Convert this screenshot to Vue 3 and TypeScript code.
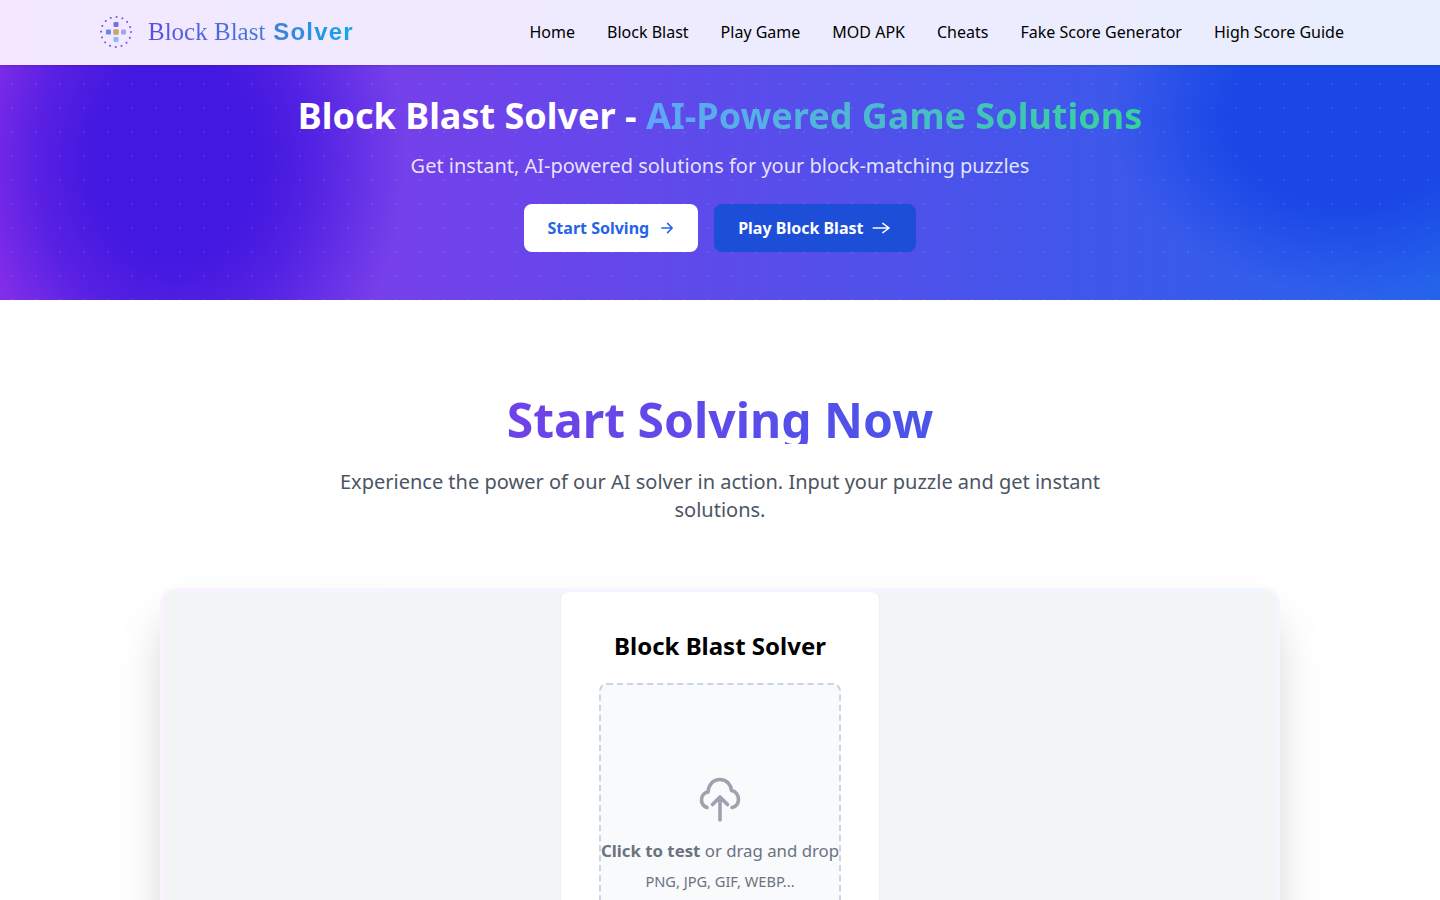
<template>
  <div class="page">
    <header class="site-header">
      <div class="site-header__inner">
        <a class="logo">
          <svg class="logo__icon" viewBox="0 0 40 40" fill="none" xmlns="http://www.w3.org/2000/svg">
            <circle cx="20" cy="20" r="15" stroke="#6d5ce8" stroke-width="2" stroke-linecap="round" stroke-dasharray="0.1 5.8" />
            <rect x="17.5" y="10" width="5" height="5" rx="1" fill="#7a6de0" />
            <rect x="10" y="17.5" width="5" height="5" rx="1" fill="#5b8def" />
            <rect x="17.3" y="17.3" width="5.4" height="5.4" rx="1" fill="#bfa76a" />
            <rect x="25" y="17.5" width="5" height="5" rx="1" fill="#a9a3e8" />
            <rect x="17.5" y="25" width="5" height="5" rx="1" fill="#8ab8fa" />
          </svg>
          <span class="logo__text">
            <span class="logo__serif">Block Blast</span> <span class="logo__bold">Solver</span>
          </span>
        </a>
        <nav class="nav">
          <a v-for="link in links" :key="link" class="nav__link">{{ link }}</a>
        </nav>
      </div>
    </header>

    <section class="hero">
      <h1 class="hero__title">Block Blast Solver - <span class="hero__accent">AI-Powered Game Solutions</span></h1>
      <p class="hero__sub">Get instant, AI-powered solutions for your block-matching puzzles</p>
      <div class="hero__actions">
        <a class="btn btn--white">
          Start Solving
          <svg class="btn__arrow" viewBox="0 0 16 16" fill="none" stroke="currentColor" stroke-width="1.6" stroke-linecap="round" stroke-linejoin="round">
            <path d="M3.8 8h10.4M9.6 3.4 14.2 8l-4.6 4.6" />
          </svg>
        </a>
        <a class="btn btn--blue">
          Play Block Blast
          <svg class="btn__long" viewBox="0 0 24 24" fill="none" stroke="currentColor" stroke-width="1.8" stroke-linecap="round" stroke-linejoin="round">
            <path d="M1.5 12h19M13 6.5l7.5 5.5-7.5 5.5" />
          </svg>
        </a>
      </div>
    </section>

    <section class="solver">
      <h2 class="solver__title">Start Solving Now</h2>
      <p class="solver__sub">Experience the power of our AI solver in action. Input your puzzle and get instant solutions.</p>
      <div class="frame">
        <div class="frame__inner">
          <div class="panel">
            <h3 class="panel__title">Block Blast Solver</h3>
            <div class="drop">
              <svg class="drop__icon" viewBox="-2 -2 44 48" fill="none" stroke="currentColor" stroke-width="3.6" stroke-linecap="round" stroke-linejoin="round">
                <path d="M7 29.5C3 28 1.5 25 1.5 22C1.5 17.5 4.5 14.5 8 14C8.5 7 13 1.5 20 1.5C27 1.5 31 7 31.5 12.5C36 13 38.5 17.5 38.5 21.5C38.5 25.5 36 28.5 32 29.5" />
                <path d="M20 42V19M12.5 26.5 20 19l7.5 7.5" />
              </svg>
              <p class="drop__text"><strong>Click to test</strong> or drag and drop</p>
              <p class="drop__hint">PNG, JPG, GIF, WEBP...</p>
            </div>
          </div>
        </div>
      </div>
    </section>
  </div>
</template>

<script setup lang="ts">
const links: string[] = [
  'Home',
  'Block Blast',
  'Play Game',
  'MOD APK',
  'Cheats',
  'Fake Score Generator',
  'High Score Guide'
]
</script>

<style>
html,
body {
  margin: 0;
  background: #fff;
}
</style>

<style scoped>
.page {
  font-family: 'Noto Sans', sans-serif;
  color: #000;
}

.site-header {
  position: relative;
  z-index: 1;
  height: 65px;
  box-sizing: border-box;
  padding-bottom: 1px;
  background: linear-gradient(90deg, #f3e8ff, #e8eefe);
  box-shadow: 0 1px 2px rgba(0, 0, 0, 0.12);
}

.site-header__inner {
  max-width: 1248px;
  height: 100%;
  margin: 0 auto;
  display: flex;
  align-items: center;
  justify-content: space-between;
}

.logo {
  display: flex;
  align-items: center;
  gap: 12px;
}

.logo__icon {
  width: 40px;
  height: 40px;
}

.logo__text {
  font-family: 'Liberation Sans', sans-serif;
  font-size: 24px;
  letter-spacing: 1.2px;
  line-height: 32px;
  background: linear-gradient(90deg, #5a4fe0, #3f7fd8 60%, #12a8ea);
  -webkit-background-clip: text;
  background-clip: text;
  color: transparent;
}

.logo__serif {
  font-family: 'Liberation Serif', serif;
  font-size: 25px;
  letter-spacing: 0;
}

.logo__bold {
  font-weight: 700;
}

.nav {
  display: flex;
  gap: 32px;
}

.nav__link {
  font-size: 16px;
  line-height: 24px;
}

.hero {
  height: 235px;
  box-sizing: border-box;
  padding-top: 25px;
  text-align: center;
  overflow: hidden;
  background-color: #2563eb;
  background-image:
    radial-gradient(circle, rgba(255, 255, 255, 0.09) 1px, transparent 1.5px),
    radial-gradient(ellipse 230px 280px at 175px 95px, #4318e0 35%, rgba(67, 24, 224, 0.72) 60%, rgba(67, 24, 224, 0) 100%),
    radial-gradient(ellipse 240px 180px at 1350px 50px, #1a47e6 50%, rgba(26, 71, 230, 0) 100%),
    linear-gradient(90deg, #9333ea, #2563eb);
  background-size: 24px 24px, auto, auto, auto;
  background-position: 0 7px, 0 0, 0 0, 0 0;
}

.hero__title {
  margin: 0;
  font-size: 36px;
  line-height: 52px;
  font-weight: 700;
  color: #fff;
}

.hero__accent {
  background: linear-gradient(90deg, #60a5fa, #34d399);
  -webkit-background-clip: text;
  background-clip: text;
  color: transparent;
}

.hero__sub {
  margin: 4px 0 0;
  font-size: 20px;
  line-height: 40px;
  color: rgba(255, 255, 255, 0.85);
}

.hero__actions {
  display: flex;
  justify-content: center;
  gap: 16px;
  margin-top: 18px;
}

.btn {
  display: inline-flex;
  align-items: center;
  height: 48px;
  box-sizing: border-box;
  padding: 0 24px;
  border-radius: 8px;
  font-size: 16px;
  font-weight: 700;
}

.btn--white {
  background: #fff;
  color: #2563eb;
}

.btn--blue {
  background: #1d4ed8;
  color: #fff;
}

.btn__arrow {
  width: 16px;
  height: 16px;
  margin-left: 9px;
}

.btn__long {
  width: 20px;
  height: 20px;
  margin-left: 9px;
}

.solver {
  padding: 96px 0 0;
  text-align: center;
}

.solver__title {
  width: max-content;
  margin: 0 auto;
  font-size: 48px;
  line-height: 48px;
  font-weight: 700;
  background: linear-gradient(90deg, #6f42e8, #4a55ea);
  -webkit-background-clip: text;
  background-clip: text;
  color: transparent;
}

.solver__sub {
  max-width: 768px;
  margin: 24px auto 0;
  font-size: 20px;
  line-height: 28px;
  color: #4b5563;
}

.frame {
  position: relative;
  width: 1120px;
  box-sizing: border-box;
  margin: 64px auto 0;
  padding: 4px;
  border-radius: 16px;
  background: linear-gradient(90deg, #faf3ff, #f2f6ff);
  box-shadow: 0 25px 50px -12px rgba(0, 0, 0, 0.25);
}

/* faint coloured glow round the frame */
.frame::before {
  content: '';
  position: absolute;
  inset: -3px;
  z-index: -1;
  border-radius: 18px;
  background: linear-gradient(90deg, #f3e8ff, #e4edff);
  filter: blur(4px);
}

.frame__inner {
  display: flex;
  justify-content: center;
  background: #f3f4f6;
  border-radius: 12px;
}

.panel {
  width: 318px;
  box-sizing: border-box;
  padding: 38px 38px 38px;
  background: #fff;
  border-radius: 8px;
  box-shadow: 0 1px 3px rgba(0, 0, 0, 0.06);
}

.panel__title {
  margin: 0;
  font-size: 24px;
  line-height: 32px;
  font-weight: 700;
  color: #000;
}

.drop {
  box-sizing: border-box;
  height: 320px;
  margin-top: 21px;
  padding-top: 91px;
  border: 2px dashed #cbd5e1;
  border-radius: 8px;
  background: #f8fafc;
}

.drop__icon {
  display: block;
  width: 44px;
  height: 48px;
  margin: 0 auto;
  color: #9ca3af;
}

.drop__text {
  margin: 14px 0 0;
  font-size: 16.8px;
  line-height: 26px;
  color: #6b7280;
  white-space: nowrap;
}

.drop__text strong {
  font-weight: 700;
}

.drop__hint {
  margin: 7px 0 0;
  font-size: 14.6px;
  line-height: 20px;
  color: #6b7280;
}
</style>
